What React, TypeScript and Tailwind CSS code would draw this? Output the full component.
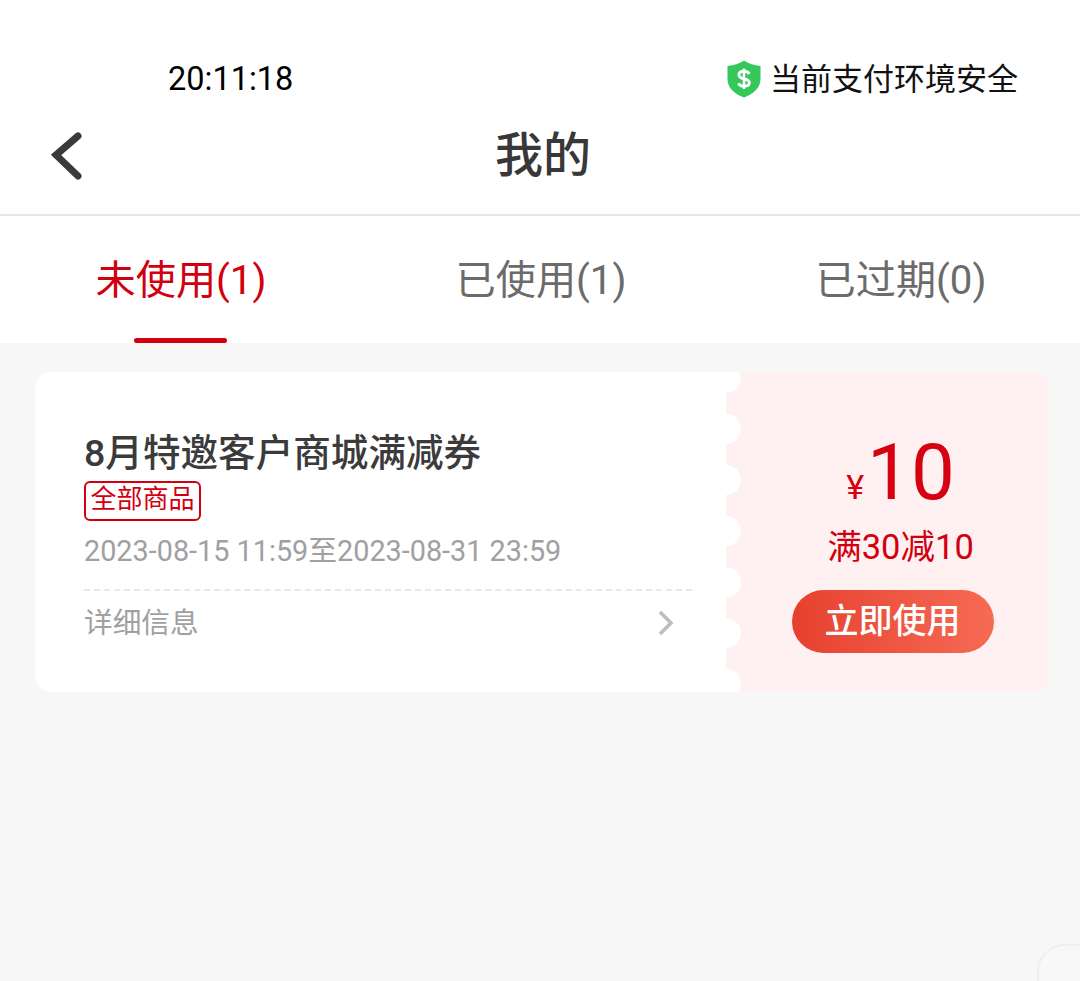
const notches = [378, 429, 480, 531, 582, 633, 684];

function Shield() {
  return (
    <svg width="34" height="38" viewBox="0 0 35 38" className="block" preserveAspectRatio="none">
      <path d="M17.5 0.5 C22 3.5 28 5.5 34.5 6 V19 C34.5 28 27 34 17.5 37.5 C8 34 0.5 28 0.5 19 V6 C7 5.5 13 3.5 17.5 0.5 Z" fill="#34c759" />
      <path d="M23 14 C22 12 20 11.3 17.5 11.3 C14.5 11.3 12.3 12.7 12.3 15 C12.3 20.3 23 17.6 23 22.6 C23 25 20.7 26.3 17.5 26.3 C15 26.3 12.8 25.4 11.8 23.4" fill="none" stroke="#fff" strokeWidth="3" />
      <path d="M17.5 8.6 V29" fill="none" stroke="#fff" strokeWidth="2.6" />
    </svg>
  );
}

export default function App() {
  return (
    <div className="relative h-[981px] w-[1080px] overflow-hidden bg-[#f7f7f7] font-['Roboto','Noto_Sans_CJK_SC',sans-serif]">
      <header className="h-[216px] border-b-2 border-[#e6e6e6] bg-white">
        <div className="flex h-[118px] items-end justify-between pb-[19px] pl-[168px] pr-[62px]">
          <span className="text-[32.5px] leading-[40px] text-black">20:11:18</span>
          <div className="flex items-center gap-[9px]">
            <Shield />
            <span className="translate-y-px text-[31px] leading-[40px] text-[#111]">当前支付环境安全</span>
          </div>
        </div>
        <div className="relative flex h-[72px] items-center justify-center">
          <svg width="40" height="56" viewBox="0 0 40 56" className="absolute left-[46px] top-[8px]">
            <path d="M32 10 L10 29 L32 50" fill="none" stroke="#3a3a3a" strokeWidth="7" strokeLinecap="round" strokeLinejoin="miter" />
          </svg>
          <h1 className="translate-x-[3px] translate-y-[2px] text-[48px] font-medium leading-[60px] text-[#383838]">我的</h1>
        </div>
      </header>

      <nav className="grid h-[127px] grid-cols-3 bg-white">
        <div className="relative flex justify-center pl-[2px] pt-[40px] text-[40.2px] leading-[50px] text-[#d2000e]">
          未使用(1)
          <span className="absolute bottom-0 left-[134px] h-[5px] w-[93px] rounded-full bg-[#d2000e]" />
        </div>
        <div className="flex justify-center pl-[2px] pt-[40px] text-[40.2px] leading-[50px] text-[#6b6b6b]">已使用(1)</div>
        <div className="flex justify-center pl-[2px] pt-[40px] text-[40.2px] leading-[50px] text-[#6b6b6b]">已过期(0)</div>
      </nav>

      <main className="pl-[35px] pr-[31px] pt-[29px]">
        <div className="relative flex h-[320px] overflow-hidden rounded-[16px] bg-white">
          <div className="w-[691px] pl-[49px] pr-[34px] pt-[56px]">
            <h2 className="text-[37.6px] font-medium leading-[50px] text-[#3b3b3b]">8月特邀客户商城满减券</h2>
            <span className="mt-[3px] block w-[117px] rounded-[6px] border-2 border-[#d2000e] pb-[4px] text-center text-[26px] leading-[32px] text-[#d2000e]">全部商品</span>
            <p className="mt-[10px] text-[28.8px] leading-[40px] text-[#a0a0a0]">2023-08-15 11:59至2023-08-31 23:59</p>
            <div className="mt-[18px] flex items-center justify-between border-t-2 border-dashed border-[#e8e8e8] pr-[17px] pt-[11px]">
              <span className="text-[28.7px] leading-[42px] text-[#a0a0a0]">详细信息</span>
              <svg width="18" height="28" viewBox="0 0 18 28">
                <path d="M3 3 L14 14 L3 25" fill="none" stroke="#bdbdbd" strokeWidth="3.5" />
              </svg>
            </div>
          </div>
          <div className="relative flex w-[323px] flex-col items-center bg-[#fff1f2] pl-[10px] pt-[56px]">
            {notches.map((y) => (
              <span key={y} className="absolute left-[-15px] size-[30px] rounded-full bg-white" style={{ top: y - 372 - 15 }} />
            ))}
            <div className="ml-[16px] flex h-[90px] items-baseline text-[#d60010]">
              <span className="mr-[3px] text-[34px] leading-[90px]">¥</span>
              <span className="text-[78px] leading-[90px]">10</span>
            </div>
            <p className="ml-[16px] mt-[7px] text-[34.5px] leading-[44px] text-[#d2000e]">满30减10</p>
            <button className="mt-[21px] h-[63px] w-[202px] rounded-full bg-gradient-to-r from-[#e6402e] to-[#f66a54] text-[34px] font-medium text-white">立即使用</button>
          </div>
        </div>
      </main>

      <div className="absolute left-[1037px] top-[944px] size-[80px] rounded-[28px] border-2 border-[#efefef] bg-[#f8f8f8]" />
    </div>
  );
}
